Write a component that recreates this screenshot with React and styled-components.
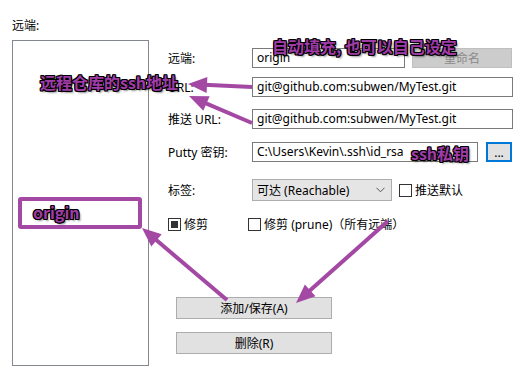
import React from "react";
import styled, { createGlobalStyle } from "styled-components";

const Global = createGlobalStyle`
  html, body { margin: 0; padding: 0; background: #fff; }
  body { font-family: "Noto Sans", "Noto Sans CJK SC", sans-serif; font-size: 12px; color: #000; }
`;

const Page = styled.div`
  position: relative;
  width: 532px;
  height: 378px;
  padding: 18px 0 0 12px;
  box-sizing: border-box;
  overflow: hidden;
`;

const Title = styled.div`
  line-height: 16px;
  height: 16px;
`;

const Main = styled.div`
  display: flex;
  margin-top: 6px;
`;

const ListBox = styled.div`
  width: 137px;
  height: 326px;
  box-sizing: border-box;
  border: 1px solid #828790;
  background: #fff;
`;

const Form = styled.div`
  display: flex;
  flex-direction: column;
  margin-left: 19px;
  padding-top: 8px;
`;

const Row = styled.div`
  display: flex;
  align-items: center;
  height: ${(p) => p.$h || 20}px;
  margin-top: ${(p) => p.$mt || 0}px;
`;

const Label = styled.div`
  width: 84px;
  flex: none;
  white-space: nowrap;
`;

const Input = styled.div`
  width: ${(p) => p.$w}px;
  height: 20px;
  box-sizing: border-box;
  border: 1px solid #7a7a7a;
  background: #fff;
  padding: 0 4px;
  line-height: 18px;
  white-space: nowrap;
  overflow: hidden;
`;

const Btn = styled.div`
  width: ${(p) => p.$w}px;
  height: ${(p) => p.$h || 20}px;
  margin-left: ${(p) => p.$ml || 0}px;
  box-sizing: border-box;
  display: flex;
  align-items: center;
  justify-content: center;
  background: ${(p) => (p.$disabled ? "#cccccc" : "#e1e1e1")};
  border: ${(p) => (p.$focus ? "2px solid #0078d7" : p.$disabled ? "1px solid #bfbfbf" : "1px solid #adadad")};
  color: ${(p) => (p.$disabled ? "#8a8a8a" : "#000")};
  white-space: nowrap;
`;

const Select = styled.div`
  width: 140px;
  height: 22px;
  box-sizing: border-box;
  border: 1px solid #adadad;
  background: #e5e5e5;
  display: flex;
  align-items: center;
  justify-content: space-between;
  padding: 0 6px 0 4px;
`;

const Check = styled.span`
  display: inline-flex;
  align-items: center;
  justify-content: center;
  width: 13px;
  height: 13px;
  box-sizing: border-box;
  border: 1px solid #333;
  background: #fff;
  margin-right: 3px;
  &::after {
    content: "";
    display: ${(p) => (p.$filled ? "block" : "none")};
    width: 7px;
    height: 7px;
    background: #333;
  }
`;

const CheckLabel = styled.div`
  display: flex;
  align-items: center;
  margin-left: ${(p) => p.$ml || 0}px;
  white-space: nowrap;
`;

const Buttons = styled.div`
  display: flex;
  flex-direction: column;
  gap: 13px;
  margin-top: 66px;
  margin-left: 8px;
`;

const Note = styled.div`
  position: absolute;
  left: ${(p) => p.$x}px;
  top: ${(p) => p.$y}px;
  font-family: "Noto Sans CJK SC", "Noto Sans", sans-serif;
  font-weight: 700;
  font-size: 16px;
  line-height: 16px;
  color: #a03ca8;
  white-space: nowrap;
  text-shadow: 1px 1px 0 #000, -1px -1px 0 #000, 1px -1px 0 #000, -1px 1px 0 #000,
    1px 0 0 #000, -1px 0 0 #000, 0 1px 0 #000, 0 -1px 0 #000, 2px 2px 2px rgba(0,0,0,0.45);
`;

const OriginBox = styled.div`
  position: absolute;
  left: 18px;
  top: 197px;
  width: 124px;
  height: 32px;
  box-sizing: border-box;
  border: 4px solid #a349a4;
  border-radius: 3px;
`;

const Overlay = styled.svg`
  position: absolute;
  left: 0;
  top: 0;
  pointer-events: none;
`;

function Arrow({ x1, y1, x2, y2 }) {
  const dx = x2 - x1;
  const dy = y2 - y1;
  const len = Math.hypot(dx, dy);
  const ux = dx / len;
  const uy = dy / len;
  const L = 19;
  const W = 8;
  const bx = x2 - ux * L;
  const by = y2 - uy * L;
  const nx = -uy;
  const ny = ux;
  const pts = `${x2},${y2} ${bx + nx * W},${by + ny * W} ${bx - nx * W},${by - ny * W}`;
  return (
    <g>
      <line x1={x1} y1={y1} x2={bx + ux * 3} y2={by + uy * 3} stroke="#a349a4" strokeWidth="4" />
      <polygon points={pts} fill="#a349a4" />
    </g>
  );
}

const Chevron = () => (
  <svg width="9" height="6" viewBox="0 0 9 6">
    <path d="M0.5 0.8 L4.5 4.8 L8.5 0.8" fill="none" stroke="#555" strokeWidth="1" />
  </svg>
);

export default function App() {
  return (
    <>
      <Global />
      <Page>
        <Title>远端:</Title>
        <Main>
          <ListBox />
          <Form>
            <Row>
              <Label>远端:</Label>
              <Input $w={153}>origin</Input>
              <Btn $w={100} $ml={7} $disabled>重命名</Btn>
            </Row>
            <Row $mt={9}>
              <Label>URL:</Label>
              <Input $w={261}>git@github.com:subwen/MyTest.git</Input>
            </Row>
            <Row $mt={12}>
              <Label>推送 URL:</Label>
              <Input $w={261}>git@github.com:subwen/MyTest.git</Input>
            </Row>
            <Row $mt={13}>
              <Label>Putty 密钥:</Label>
              <Input $w={226}>C:\Users\Kevin\.ssh\id_rsa</Input>
              <Btn $w={26} $ml={8} $focus>...</Btn>
            </Row>
            <Row $mt={17} $h={22}>
              <Label>标签:</Label>
              <Select>
                <span>可达 (Reachable)</span>
                <Chevron />
              </Select>
              <CheckLabel $ml={7}>
                <Check />
                推送默认
              </CheckLabel>
            </Row>
            <Row $mt={16} $h={14}>
              <CheckLabel>
                <Check $filled />
                修剪
              </CheckLabel>
              <CheckLabel $ml={40}>
                <Check />
                修剪 (prune)（所有远端）
              </CheckLabel>
            </Row>
            <Buttons>
              <Btn $w={156} $h={22}>添加/保存(A)</Btn>
              <Btn $w={156} $h={22}>删除(R)</Btn>
            </Buttons>
          </Form>
        </Main>

        <OriginBox />
        <Overlay width="532" height="378" viewBox="0 0 532 378">
          <Arrow x1={252} y1={87} x2={188} y2={84} />
          <Arrow x1={252} y1={123} x2={189} y2={96} />
          <Arrow x1={227} y1={300} x2={142} y2={228} />
          <Arrow x1={388} y1={221} x2={296} y2={303} />
        </Overlay>
        <Note $x={40} $y={74}>远程仓库的ssh地址</Note>
        <Note $x={272} $y={38}>自动填充, 也可以自己设定</Note>
        <Note $x={411} $y={145}>ssh私钥</Note>
        <Note $x={33} $y={204}>origin</Note>
      </Page>
    </>
  );
}
